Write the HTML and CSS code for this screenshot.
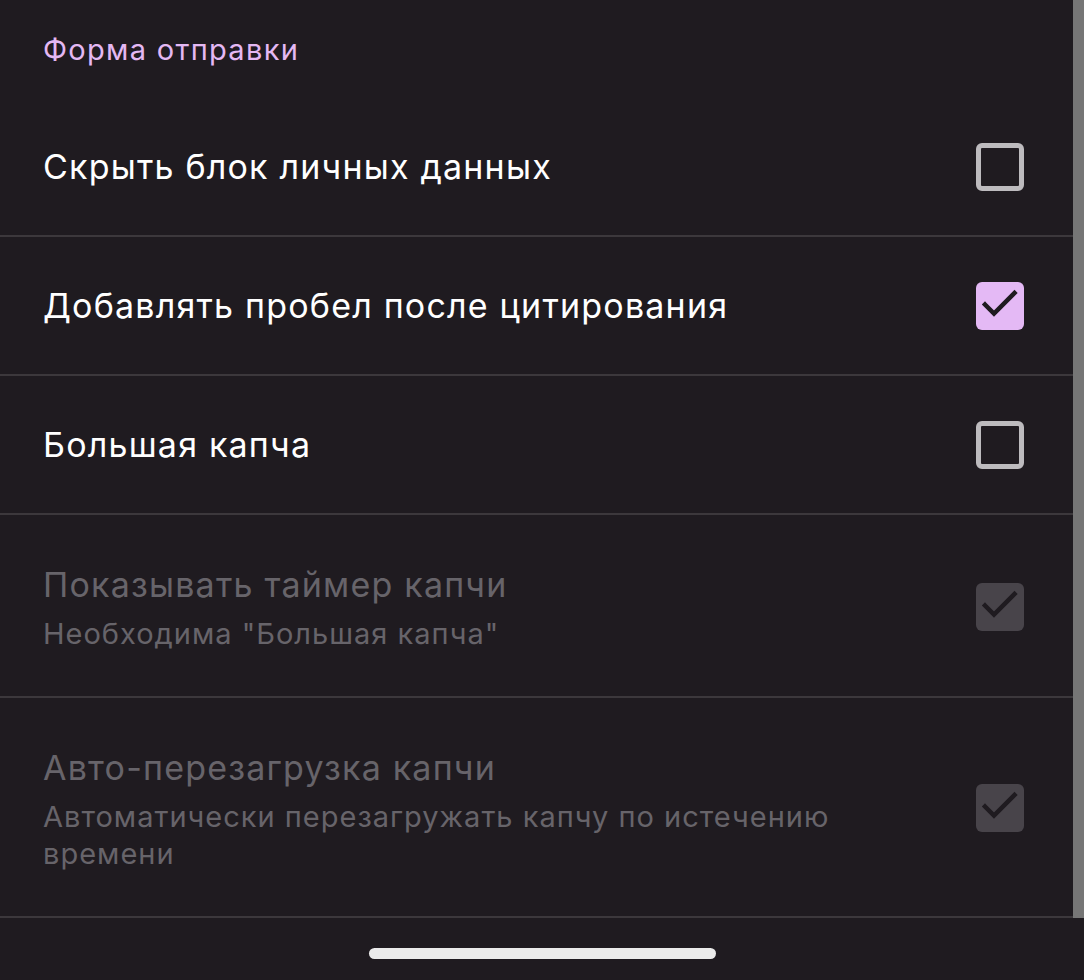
FILE: index.html
```html
<!DOCTYPE html>
<html lang="ru">
<head>
<meta charset="utf-8">
<title>Форма отправки</title>
<link rel="stylesheet" href="styles.css">
</head>
<body>
<div class="screen">
  <div class="scrollbar"></div>
  <div class="section-header">Форма отправки</div>
  <div class="list">
    <div class="row">
      <div class="texts"><div class="title">Скрыть блок личных данных</div></div>
      <span class="checkbox"></span>
    </div>
    <div class="row">
      <div class="texts"><div class="title">Добавлять пробел после цитирования</div></div>
      <span class="checkbox checked">
        <svg viewBox="0 0 48 48" width="48" height="48"><path d="M9 22.5 L18 31.5 L38.5 11" fill="none" stroke="#1f1b20" stroke-width="4.5" stroke-linecap="square"/></svg>
      </span>
    </div>
    <div class="row">
      <div class="texts"><div class="title">Большая капча</div></div>
      <span class="checkbox"></span>
    </div>
    <div class="row disabled two">
      <div class="texts">
        <div class="title">Показывать таймер капчи</div>
        <div class="subtitle">Необходима "Большая капча"</div>
      </div>
      <span class="checkbox checked">
        <svg viewBox="0 0 48 48" width="48" height="48"><path d="M9 22.5 L18 31.5 L38.5 11" fill="none" stroke="#1f1b20" stroke-width="4.5" stroke-linecap="square"/></svg>
      </span>
    </div>
    <div class="row disabled two">
      <div class="texts">
        <div class="title">Авто-перезагрузка капчи</div>
        <div class="subtitle">Автоматически перезагружать капчу по истечению времени</div>
      </div>
      <span class="checkbox checked">
        <svg viewBox="0 0 48 48" width="48" height="48"><path d="M9 22.5 L18 31.5 L38.5 11" fill="none" stroke="#1f1b20" stroke-width="4.5" stroke-linecap="square"/></svg>
      </span>
    </div>
  </div>
  <div class="home-bar"><span class="home-indicator"></span></div>
</div>
</body>
</html>
```
FILE: styles.css
```css
html, body {
  margin: 0;
  padding: 0;
  background: #1f1b20;
}
body {
  font-family: Inter, Roboto, "Noto Sans", sans-serif;
  color: #ffffff;
}
.screen {
  position: relative;
  width: 1084px;
  height: 980px;
  overflow: hidden;
  background: #1f1b20;
}
.scrollbar {
  position: absolute;
  top: 0;
  right: 0;
  width: 11px;
  height: 918px;
  background: #767676;
}
.section-header {
  height: 98px;
  display: flex;
  align-items: center;
  padding: 0 43px;
  font-size: 29px;
  letter-spacing: 1.3px;
  color: #e4b8f3;
  box-sizing: border-box;
}
.list {
  display: flex;
  flex-direction: column;
}
.row {
  display: flex;
  align-items: center;
  justify-content: space-between;
  min-height: 137px;
  padding: 0 60px 0 43px;
  border-bottom: 2px solid rgba(255, 255, 255, 0.13);
}
.row.two {
  min-height: 0;
  padding-top: 46px;
  padding-bottom: 44px;
}
.texts {
  display: flex;
  flex-direction: column;
  gap: 6px;
  max-width: 820px;
}
.title {
  font-size: 34px;
  line-height: 48px;
  letter-spacing: 1.2px;
  color: #ffffff;
}
.subtitle {
  font-size: 29px;
  line-height: 37px;
  letter-spacing: 1px;
  color: #67646a;
}
.row.disabled .title {
  color: #67646a;
}
.checkbox {
  width: 48px;
  height: 48px;
  box-sizing: border-box;
  border: 5px solid #bdbbbe;
  border-radius: 6px;
  flex: none;
}
.checkbox.checked {
  border: none;
  background: #e4b9f5;
}
.checkbox svg {
  display: block;
}
.row.disabled .checkbox.checked {
  background: #48444a;
}
.home-bar {
  display: flex;
  justify-content: center;
  padding-top: 30px;
}
.home-indicator {
  width: 347px;
  height: 11px;
  border-radius: 6px;
  background: #ebebeb;
}
```
